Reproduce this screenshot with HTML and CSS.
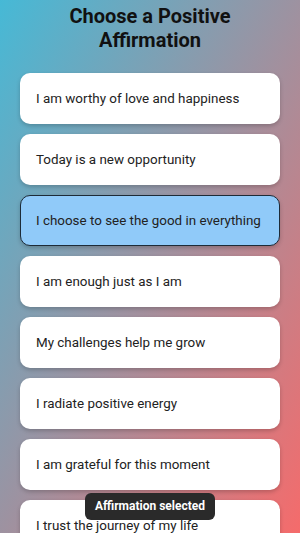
FILE: index.html
```html
<!DOCTYPE html>
<html lang="en">
<head>
    <meta charset="UTF-8">
    <meta name="viewport" content="width=device-width, initial-scale=1.0">
    <title>Affirmations</title>
    <link rel="stylesheet" href="styles.css">
</head>
<body>
    <div class="screen">
        <h1>Choose a Positive Affirmation</h1>

        <div class="affirmation-list">
            <div class="affirmation">I am worthy of love and happiness</div>
            <div class="affirmation">Today is a new opportunity</div>
            <div class="affirmation selected">I choose to see the good in everything</div>
            <div class="affirmation">I am enough just as I am</div>
            <div class="affirmation">My challenges help me grow</div>
            <div class="affirmation">I radiate positive energy</div>
            <div class="affirmation">I am grateful for this moment</div>
            <div class="affirmation">I trust the journey of my life</div>
        </div>
    </div>

    <div class="toast">Affirmation selected</div>
</body>
</html>
```

FILE: styles.css
```css
* {
    margin: 0;
    padding: 0;
    box-sizing: border-box;
    font-family: Roboto, "Liberation Sans", sans-serif;
}

html, body {
    height: 100%;
}

body {
    background: linear-gradient(to bottom right, #46b9d6, #f56b6b);
    overflow: hidden;
}

.screen {
    padding: 4px 20px 0;
}

h1 {
    text-align: center;
    font-size: 20px;
    line-height: 24px;
    font-weight: 700;
    color: #111;
    padding: 0 30px;
    margin-bottom: 21px;
}

.affirmation-list {
    display: flex;
    flex-direction: column;
    gap: 10px;
}

.affirmation {
    background-color: #fff;
    height: 51px;
    display: flex;
    align-items: center;
    padding: 0 15px;
    border: 1.5px solid transparent;
    border-radius: 10px;
    box-shadow: 0 2px 4px rgba(0,0,0,0.2);
    font-size: 13.4px;
    color: #222;
    white-space: nowrap;
}

.affirmation.selected {
    background-color: #90caf9;
    border-color: #1d2b38;
}

.toast {
    position: fixed;
    left: 50%;
    bottom: 13px;
    transform: translateX(-50%);
    background-color: #2a2a2a;
    color: #fff;
    font-size: 12px;
    font-weight: 700;
    line-height: 15px;
    padding: 6px 10px;
    border-radius: 6px;
    white-space: nowrap;
}
```
